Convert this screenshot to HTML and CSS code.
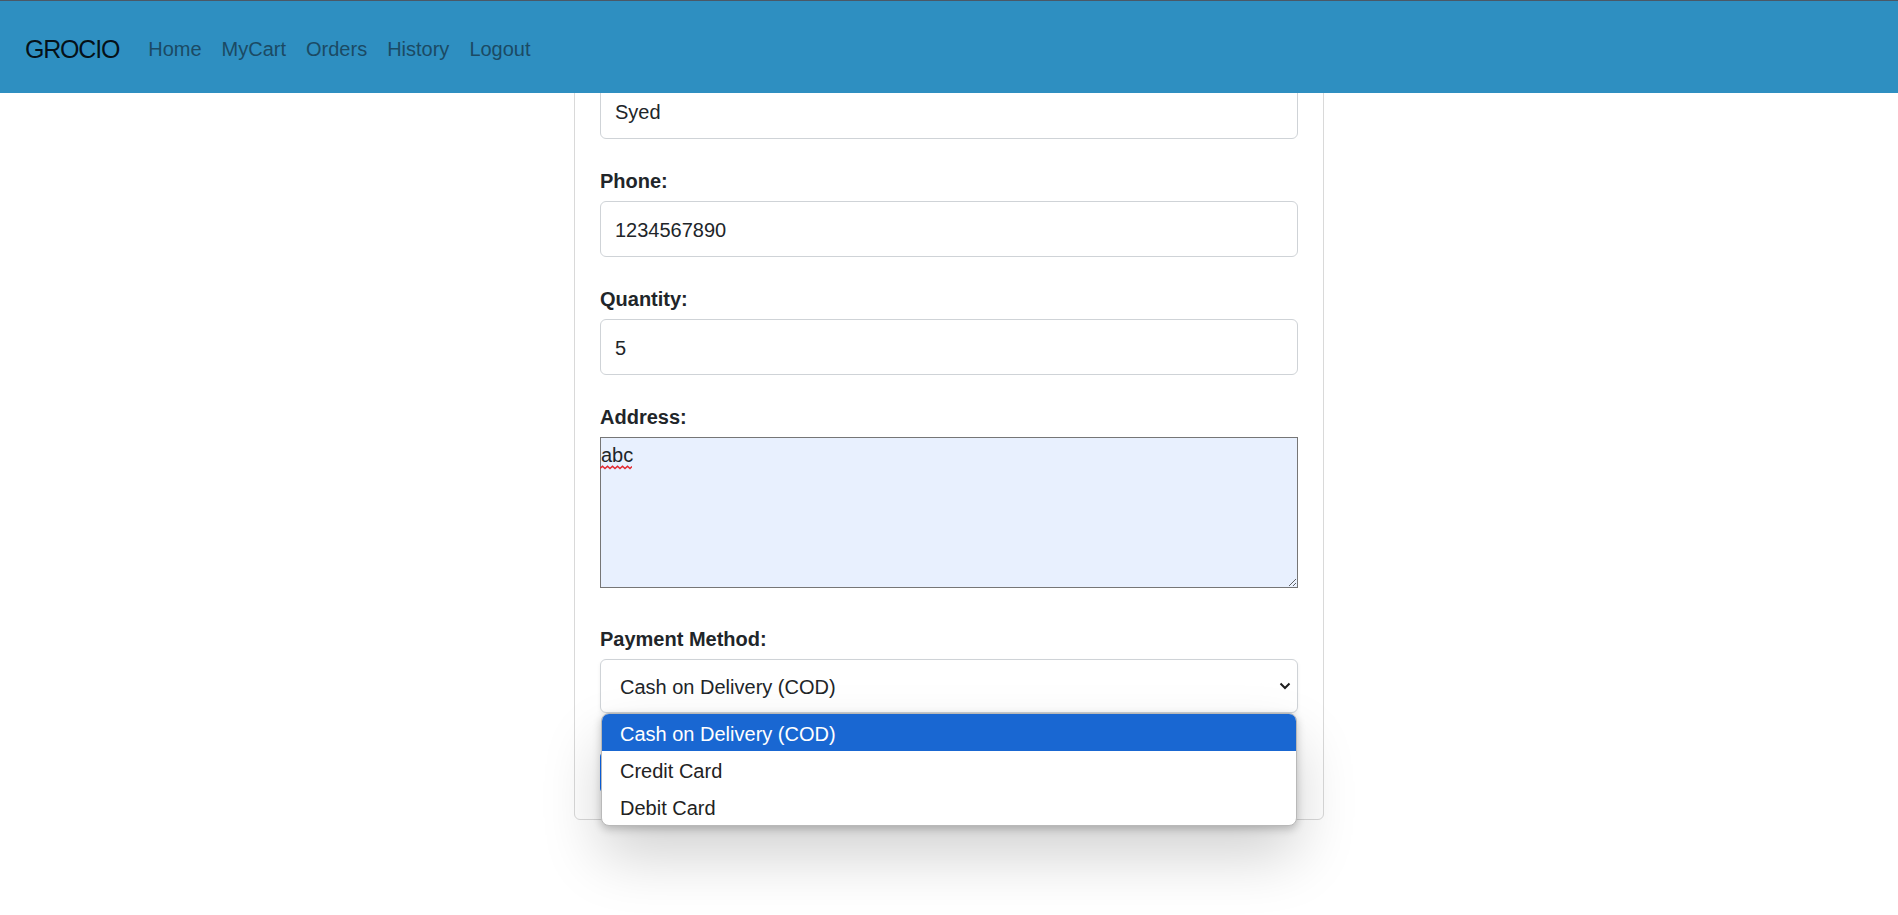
FILE: index.html
```html
<!DOCTYPE html>
<html lang="en">
<head>
<meta charset="utf-8">
<title>GROCIO - Place Order</title>
<link rel="stylesheet" href="styles.css">
</head>
<body>
<nav class="navbar">
  <a class="brand" href="#">GROCIO</a>
  <ul class="nav">
    <li><a class="nav-link" href="#">Home</a></li>
    <li><a class="nav-link" href="#">MyCart</a></li>
    <li><a class="nav-link" href="#">Orders</a></li>
    <li><a class="nav-link" href="#">History</a></li>
    <li><a class="nav-link" href="#">Logout</a></li>
  </ul>
</nav>

<main class="page">
  <form class="card">
    <div class="field">
      <label class="label" for="name">Name:</label>
      <input class="input" id="name" type="text" value="Syed">
    </div>
    <div class="field">
      <label class="label" for="phone">Phone:</label>
      <input class="input" id="phone" type="text" value="1234567890">
    </div>
    <div class="field">
      <label class="label" for="qty">Quantity:</label>
      <input class="input" id="qty" type="text" value="5">
    </div>
    <div class="field field-address">
      <label class="label" for="address">Address:</label>
      <div class="textarea-wrap">
        <textarea class="textarea" id="address" spellcheck="false">abc</textarea>
        <svg class="squiggle" width="32" height="5" viewBox="0 0 32 5" aria-hidden="true">
          <path d="M0 3.5 L2.5 1.2 L5 3.5 L7.5 1.2 L10 3.5 L12.5 1.2 L15 3.5 L17.5 1.2 L20 3.5 L22.5 1.2 L25 3.5 L27.5 1.2 L30 3.5 L32 1.6" fill="none" stroke="#e3262c" stroke-width="1.4"/>
        </svg>
      </div>
    </div>
    <div class="field field-select">
      <label class="label">Payment Method:</label>
      <div class="select">
        <span>Cash on Delivery (COD)</span>
        <svg class="chevron" width="12" height="8" viewBox="0 0 12 8" aria-hidden="true">
          <path d="M1.5 1.5 L6 6 L10.5 1.5" fill="none" stroke="#1e1e1e" stroke-width="2"/>
        </svg>
      </div>
      <ul class="dropdown">
        <li class="option option-active">Cash on Delivery (COD)</li>
        <li class="option">Credit Card</li>
        <li class="option">Debit Card</li>
      </ul>
    </div>
    <button class="submit" type="button" aria-label="Place Order"></button>
  </form>
</main>
</body>
</html>
```

FILE: styles.css
```css
* {
  box-sizing: border-box;
}

html, body {
  margin: 0;
  padding: 0;
  background: #ffffff;
}

body {
  font-family: "Liberation Sans", Arial, sans-serif;
  font-size: 20px;
  line-height: 30px;
  color: #212529;
  height: 915px;
  overflow: hidden;
}

/* ---------- navbar ---------- */
.navbar {
  position: fixed;
  top: 0;
  left: 0;
  right: 0;
  z-index: 20;
  height: 93px;
  display: flex;
  align-items: center;
  padding: 3px 0 0 25px;
  background: #2e8fc1;
  border-top: 1px solid #4a5866;
}

.brand {
  font-size: 25px;
  letter-spacing: -1.2px;
  color: rgba(0, 0, 0, 0.88);
  text-decoration: none;
  margin-right: 19px;
  line-height: 30px;
}

.nav {
  list-style: none;
  margin: 0;
  padding: 0;
  display: flex;
}

.nav-link {
  display: block;
  padding: 0 10px;
  color: #1b4a64;
  text-decoration: none;
  font-size: 20px;
}

/* ---------- page / card ---------- */
.page {
  display: flex;
  justify-content: center;
  padding-top: 20px;
}

.card {
  width: 750px;
  border: 1px solid #d9d9d9;
  border-radius: 6px;
  padding: 25px;
  background: #fff;
}

.field {
  margin-bottom: 25px;
}

.field-address {
  margin-bottom: 34px;
}

.field-select {
  position: relative;
  margin-bottom: 38px;
}

.label {
  display: block;
  font-weight: bold;
  line-height: 30px;
  padding-top: 2px;
  margin-bottom: 5px;
}

.input {
  display: block;
  width: 100%;
  height: 56px;
  padding: 3px 14px 0;
  font-family: inherit;
  font-size: 20px;
  color: #212529;
  background: #fff;
  border: 1px solid #cfd3d7;
  border-radius: 6px;
  outline: none;
}

.textarea-wrap {
  position: relative;
}

.textarea {
  display: block;
  width: 100%;
  height: 151px;
  margin: 0;
  padding: 6px 0 0 0;
  font-family: inherit;
  font-size: 20px;
  line-height: 23px;
  color: #212529;
  background: #e8f0fe;
  border: 1px solid #767676;
  border-radius: 0;
  outline: none;
}

.squiggle {
  position: absolute;
  left: 0;
  top: 28px;
}

.select {
  display: flex;
  align-items: center;
  justify-content: space-between;
  height: 54px;
  padding: 2px 6px 0 19px;
  border: 1px solid #cfd3d7;
  border-radius: 6px;
  background: #fff;
  color: #212529;
  box-shadow: 0 2px 4px rgba(0, 0, 0, 0.06);
}

.chevron {
  display: block;
  margin-top: -2px;
}

.dropdown {
  position: absolute;
  z-index: 10;
  top: 100%;
  left: 1px;
  right: 1px;
  margin: 0;
  padding: 0;
  list-style: none;
  background: #fff;
  border: 1px solid #b9b9b9;
  border-radius: 8px;
  overflow: hidden;
  box-shadow: 0 3px 8px rgba(0, 0, 0, 0.22), 0 30px 60px rgba(0, 0, 0, 0.18);
}

.option {
  height: 37px;
  line-height: 34px;
  padding: 3px 0 0 18px;
  color: #222;
}

.option-active {
  background: #1967d2;
  color: #fff;
}

.submit {
  display: block;
  width: 160px;
  height: 43px;
  padding: 0;
  background: #0d6efd;
  border: 1px solid #0d6efd;
  border-radius: 6px;
}
```
